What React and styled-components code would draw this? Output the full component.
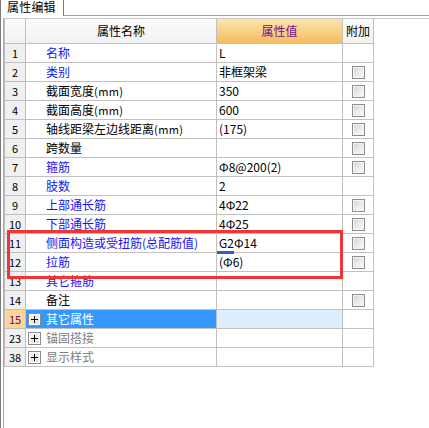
import React from 'react';
import styled, { createGlobalStyle, css } from 'styled-components';

const GlobalStyle = createGlobalStyle`
    html, body {
        margin: 0;
        padding: 0;
        background: #ffffff;
    }
    body {
        font-family: "Noto Sans CJK SC", "DejaVu Sans", sans-serif;
        font-size: 12px;
        color: #000000;
    }
    * {
        box-sizing: border-box;
    }
`;

const Page = styled.div`
    position: relative;
    width: 429px;
    height: 428px;
    overflow: hidden;
    display: flex;
    flex-direction: column;
`;

const TabStrip = styled.div`
    display: flex;
    height: 16px;
    border-bottom: 1px solid #a0a0a0;
`;

const Tab = styled.div`
    width: 64px;
    height: 16px;
    margin-bottom: -1px;
    padding-left: 6px;
    border-left: 1px solid #7a7a7a;
    border-right: 1px solid #7a7a7a;
    background: #ffffff;
    font-size: 12px;
    line-height: 14px;
    letter-spacing: 0.2px;
`;

const Frame = styled.div`
    flex: 1;
    display: flex;
    flex-direction: column;
    padding-top: 2px;
    border-left: 1px solid #7a7a7a;
`;

const Content = styled.div`
    flex: 1;
    margin-left: 2px;
    border-top: 1px solid #c8c8c8;
    border-left: 1px solid #a8a8a8;
`;

const Grid = styled.div`
    display: grid;
    grid-template-columns: 22px 191px 126px 31px;
    grid-template-rows: 25px;
    grid-auto-rows: 19px;
    width: 370px;
`;

const cellBase = css`
    display: flex;
    align-items: center;
    border-right: 1px solid #c0c0c0;
    border-bottom: 1px solid #c0c0c0;
    white-space: nowrap;
    line-height: 18px;
`;

const HeadCell = styled.div`
    ${cellBase}
    justify-content: center;
    font-size: 12px;
    background: ${(p) =>
        p.$variant === 'orange'
            ? 'linear-gradient(to bottom, #fde3ad 0%, #f7cd80 60%, #f2bd5c 100%)'
            : 'linear-gradient(to bottom, #fcfcfc 0%, #f1f1f1 100%)'};
    color: ${(p) => (p.$variant === 'orange' ? '#7a0a8c' : '#000000')};
    ${(p) => p.$first && 'border-left: 1px solid #c0c0c0;'}
`;

const NumCell = styled.div`
    ${cellBase}
    justify-content: center;
    border-left: 1px solid #c0c0c0;
    font-size: 11px;
    background: ${(p) => (p.$active ? '#fdd597' : '#f0f0f0')};
    color: ${(p) => (p.$active ? '#6e0a78' : '#000000')};
`;

const toneColor = {
    blue: '#1414f5',
    black: '#000000',
    gray: '#808080',
};

const NameCell = styled.div`
    ${cellBase}
    overflow: hidden;
    padding-left: ${(p) => (p.$group ? '2px' : '20px')};
    background: ${(p) => (p.$selected ? '#3399ff' : '#ffffff')};
    color: ${(p) => (p.$selected ? '#ffffff' : toneColor[p.$tone])};
`;

const Unit = styled.span`
    font-size: 11px;
    letter-spacing: 0.4px;
`;

const ValueCell = styled.div`
    ${cellBase}
    padding-left: 2px;
    background: ${(p) => (p.$selected ? '#ddeeff' : '#ffffff')};
`;

const Marked = styled.span`
    position: relative;

    &::after {
        content: '';
        position: absolute;
        left: -2px;
        bottom: -2px;
        width: 17px;
        height: 3px;
        background: #3a58cf;
        z-index: 1;
    }
`;

const ExtraCell = styled.div`
    ${cellBase}
    justify-content: center;
    padding-left: 1px;
`;

const CheckBox = styled.span`
    width: 13px;
    height: 13px;
    border: 1px solid #8e8e8e;
    box-shadow: inset 0 0 0 1px #f4f4f4;
    background: linear-gradient(135deg, #d2d2d2 0%, #ececec 55%, #fbfbfb 100%);
`;

const Expander = styled.span`
    position: relative;
    flex: none;
    width: 13px;
    height: 13px;
    margin-right: 5px;
    border: 1px solid #8c8c8c;
    box-shadow: inset 0 0 0 1px #ffffff;
    background: linear-gradient(135deg, #f6f6f6 0%, #e2e2e2 100%);

    &::before,
    &::after {
        content: '';
        position: absolute;
        background: #000000;
    }
    &::before {
        left: 2px;
        top: 5px;
        width: 7px;
        height: 1px;
    }
    &::after {
        left: 5px;
        top: 2px;
        width: 1px;
        height: 7px;
    }
`;

const Highlight = styled.div`
    position: absolute;
    left: 7px;
    top: 230px;
    width: 336px;
    height: 49px;
    border: 3px solid #ef3535;
    pointer-events: none;
`;

const rows = [
    { n: 1, name: '名称', tone: 'blue', value: 'L' },
    { n: 2, name: '类别', tone: 'blue', value: '非框架梁', check: true },
    { n: 3, name: '截面宽度', unit: '(mm)', tone: 'black', value: '350', check: true },
    { n: 4, name: '截面高度', unit: '(mm)', tone: 'black', value: '600', check: true },
    { n: 5, name: '轴线距梁左边线距离', unit: '(mm)', tone: 'black', value: '(175)', check: true },
    { n: 6, name: '跨数量', tone: 'black', value: '', check: true },
    { n: 7, name: '箍筋', tone: 'blue', value: 'Φ8@200(2)', check: true },
    { n: 8, name: '肢数', tone: 'blue', value: '2' },
    { n: 9, name: '上部通长筋', tone: 'blue', value: '4Φ22', check: true },
    { n: 10, name: '下部通长筋', tone: 'blue', value: '4Φ25', check: true },
    { n: 11, name: '侧面构造或受扭筋(总配筋值)', tone: 'blue', mark: 'G2', value: 'Φ14', check: true },
    { n: 12, name: '拉筋', tone: 'blue', value: '(Φ6)', check: true },
    { n: 13, name: '其它箍筋', tone: 'blue', value: '' },
    { n: 14, name: '备注', tone: 'black', value: '', check: true },
    { n: 15, name: '其它属性', tone: 'black', group: true, selected: true },
    { n: 23, name: '锚固搭接', tone: 'gray', group: true },
    { n: 38, name: '显示样式', tone: 'gray', group: true },
];

export default function App() {
    return (
        <>
            <GlobalStyle />
            <Page>
                <TabStrip>
                    <Tab>属性编辑</Tab>
                </TabStrip>
                <Frame>
                    <Content>
                        <Grid>
                            <HeadCell $first />
                            <HeadCell>属性名称</HeadCell>
                            <HeadCell $variant="orange">属性值</HeadCell>
                            <HeadCell>附加</HeadCell>

                            {rows.map((row) => (
                                <React.Fragment key={row.n}>
                                    <NumCell $active={row.selected}>{row.n}</NumCell>
                                    <NameCell
                                        $tone={row.tone}
                                        $group={row.group}
                                        $selected={row.selected}
                                    >
                                        {row.group && <Expander />}
                                        {row.name}
                                        {row.unit && <Unit>{row.unit}</Unit>}
                                    </NameCell>
                                    <ValueCell $selected={row.selected}>
                                        {row.mark && <Marked>{row.mark}</Marked>}
                                        {row.value}
                                    </ValueCell>
                                    <ExtraCell>{row.check && <CheckBox />}</ExtraCell>
                                </React.Fragment>
                            ))}
                        </Grid>
                    </Content>
                </Frame>
                <Highlight />
            </Page>
        </>
    );
}
